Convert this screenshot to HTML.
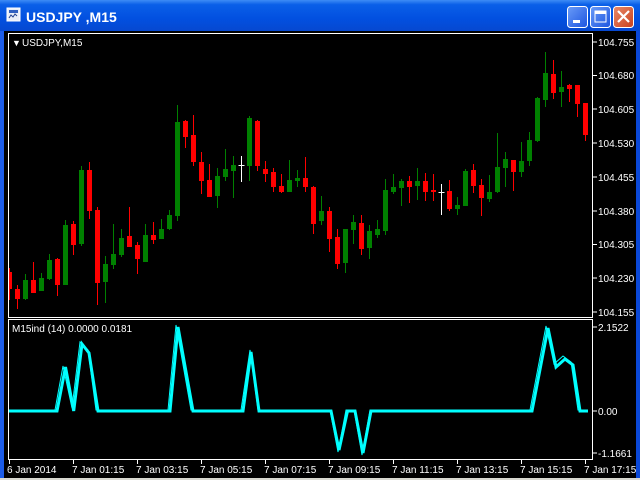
<!DOCTYPE html>
<html><head><meta charset="utf-8"><style>
html,body{margin:0;padding:0;width:640px;height:480px;overflow:hidden;background:#0842d0}
svg{display:block}
text{font-family:"Liberation Sans",sans-serif;font-size:10px;fill:#fff}
</style></head><body>
<svg width="640" height="480" xmlns="http://www.w3.org/2000/svg">
<defs>
<linearGradient id="tb" x1="0" y1="0" x2="0" y2="1">
<stop offset="0" stop-color="#3d8cf5"/><stop offset="0.15" stop-color="#0a5fe8"/><stop offset="0.6" stop-color="#0250e0"/><stop offset="1" stop-color="#0648d0"/></linearGradient>
<linearGradient id="bb" x1="0" y1="0" x2="1" y2="1"><stop offset="0" stop-color="#6a9cf8"/><stop offset="1" stop-color="#1c54e0"/></linearGradient>
<linearGradient id="cb" x1="0" y1="0" x2="1" y2="1"><stop offset="0" stop-color="#e88a6a"/><stop offset="1" stop-color="#c9401c"/></linearGradient>
<clipPath id="cp"><rect x="9" y="34" width="583" height="283"/></clipPath>
</defs>
<rect x="0" y="0" width="640" height="480" fill="#0843d4"/>
<rect x="0" y="0" width="640" height="31" fill="url(#tb)"/>
<rect x="0" y="31" width="4" height="449" fill="#1c5ce8"/>
<rect x="636" y="31" width="4" height="449" fill="#0a48d8"/>
<rect x="4" y="31" width="632" height="447" fill="#000"/>
<rect x="0" y="478" width="640" height="2" fill="#d8d8d0"/>
<rect x="7" y="8" width="13" height="13" fill="#e8eef8" stroke="#fff"/>
<rect x="9" y="10" width="9" height="3" fill="#3060c0"/>
<path d="M9 18 l2 -3 l2 2 l2 -3 l2 2" stroke="#204090" fill="none"/>
<text x="26" y="22" style="font-size:14px;font-weight:bold">USDJPY ,M15</text>
<rect x="567.5" y="6.5" width="20" height="21" rx="3" fill="url(#bb)" stroke="#fff"/>
<rect x="573" y="20" width="7" height="3" fill="#fff"/>
<rect x="590.5" y="6.5" width="20" height="21" rx="3" fill="url(#bb)" stroke="#fff"/>
<rect x="595" y="11" width="11" height="11" fill="none" stroke="#fff" stroke-width="1"/>
<rect x="595" y="11" width="11" height="3" fill="#fff"/>
<rect x="613.5" y="6.5" width="20" height="21" rx="3" fill="url(#cb)" stroke="#fff"/>
<path d="M618 11 L629 22 M629 11 L618 22" stroke="#fff" stroke-width="2.2"/>
<g id="c" clip-path="url(#cp)"></g>
<rect x="8.5" y="33.5" width="584" height="284" fill="none" stroke="#fff"/>
<rect x="8.5" y="319.5" width="584" height="140" fill="none" stroke="#fff"/>
<text x="12" y="46" style="font-size:9px">▼</text>
<text x="22" y="46">USDJPY,M15</text>
<text x="12" y="332">M15ind (14) 0.0000 0.0181</text>
<g stroke="#fff">
<path d="M593 42h4M593 75.5h4M593 109h4M593 143h4M593 177h4M593 211h4M593 244.5h4M593 278h4M593 312h4M593 327h4M593 411h4M593 453h4"/>
<path d="M9.5 460v4M73.5 460v4M137.5 460v4M201.5 460v4M265.5 460v4M329.5 460v4M393.5 460v4M457.5 460v4M521.5 460v4M585.5 460v4"/>
</g>
<g>
<text x="598" y="46">104.755</text><text x="598" y="79">104.680</text><text x="598" y="113">104.605</text>
<text x="598" y="147">104.530</text><text x="598" y="181">104.455</text><text x="598" y="215">104.380</text>
<text x="598" y="248">104.305</text><text x="598" y="282">104.230</text><text x="598" y="316">104.155</text>
<text x="598" y="331">2.1522</text><text x="598" y="415">0.00</text><text x="598" y="457">-1.1661</text>
</g>
<g>
<text x="7" y="473">6 Jan 2014</text><text x="72" y="473">7 Jan 01:15</text><text x="136" y="473">7 Jan 03:15</text>
<text x="200" y="473">7 Jan 05:15</text><text x="264" y="473">7 Jan 07:15</text><text x="328" y="473">7 Jan 09:15</text>
<text x="392" y="473">7 Jan 11:15</text><text x="456" y="473">7 Jan 13:15</text><text x="520" y="473">7 Jan 15:15</text>
<text x="584" y="473">7 Jan 17:15</text>
</g>
<polyline fill="none" stroke="#00ffff" stroke-width="3" points="9,411 57,411 65.5,367 73.7,411 82,344 89,353 98,411 170,411 178,327 193,411 243,411 251,352 259,411 331,411 339,450 347.5,411 355,411 363,453 371,411 532,411 548,328 556,367 565,359 573,365 580,411 588,411"/>
<polyline fill="none" stroke="#00ffff" stroke-width="1" points="9,410 55,410 63,366 72,408 80,342 88,350 96,410 168,410 176,325 191,410 241,410 250,350 258,410 330,410 338,452 346,410 354,410 362,455 370,410 530,410 546,326 554,364 563,356 571,362 578,410 586,410"/>
</svg>
<script>
var d=[
['r',272,289,268,300],['r',289,299,285,309],['g',280,299,274,300],['r',280,293,262,293],['g',278,291,273,291],
['g',260,279,254,280],['r',259,285,258,296],['g',225,285,220,285],['r',224,245,221,255],['g',170,244,166,246],
['r',170,211,162,219],['r',210,283,207,305],['g',264,282,256,303],['g',254,265,224,269],['g',238,255,229,257],
['r',236,247,207,247],['r',245,259,242,274],['g',235,262,224,262],['r',235,240,222,244],['g',229,239,219,239],
['g',215,229,210,230],['g',122,216,105,221],['r',121,137,120,148],['r',135,162,115,166],['r',162,181,152,194],
['r',180,197,164,197],['g',176,196,168,208],['g',169,177,149,181],['g',165,171,156,198],['w',165,165,156,182],
['g',118,166,116,181],['r',121,166,120,171],['r',169,174,161,182],['r',172,187,168,192],['r',186,192,174,193],
['g',180,192,160,192],['g',178,181,170,187],['r',178,187,157,192],['r',187,224,186,234],['g',211,221,196,225],
['r',211,239,207,252],['r',237,264,229,269],['g',229,263,229,273],['g',222,230,215,244],['r',223,249,215,255],
['g',231,248,225,259],['g',229,235,220,238],['g',190,231,179,235],['g',187,192,174,194],['g',181,188,179,206],
['r',181,187,176,203],['g',181,186,168,200],['r',181,192,173,201],['r',190,192,174,201],['w',192,192,184,215],
['r',191,209,180,211],['g',205,209,197,215],['g',171,206,169,206],['r',170,186,164,193],['r',185,198,179,216],
['g',192,199,175,202],['g',167,192,133,193],['g',159,168,152,187],['r',160,172,160,191],['g',161,172,142,177],
['g',140,161,132,166],['g',98,141,97,142],['g',73,100,52,107],['r',74,93,60,99],['g',87,92,71,107],
['r',85,89,84,102],['r',85,104,85,117],['r',103,135,103,141]];
var col={r:'#ff0000',g:'#008000',w:'#ffffff'},s='';
d.forEach(function(c,k){var x=9.5+8*k;
s+='<line x1="'+x+'" x2="'+x+'" y1="'+c[3]+'" y2="'+c[4]+'" stroke="'+col[c[0]]+'"/>';
if(c[0]=='w'){s+='<line x1="'+(x-3)+'" x2="'+(x+3)+'" y1="'+c[1]+'.5" y2="'+c[1]+'.5" stroke="#fff"/>';}
else s+='<rect x="'+(x-2.5)+'" y="'+c[1]+'" width="5" height="'+Math.max(2,c[2]-c[1])+'" fill="'+col[c[0]]+'"/>';});
document.getElementById('c').innerHTML=s;
</script>
</body></html>
